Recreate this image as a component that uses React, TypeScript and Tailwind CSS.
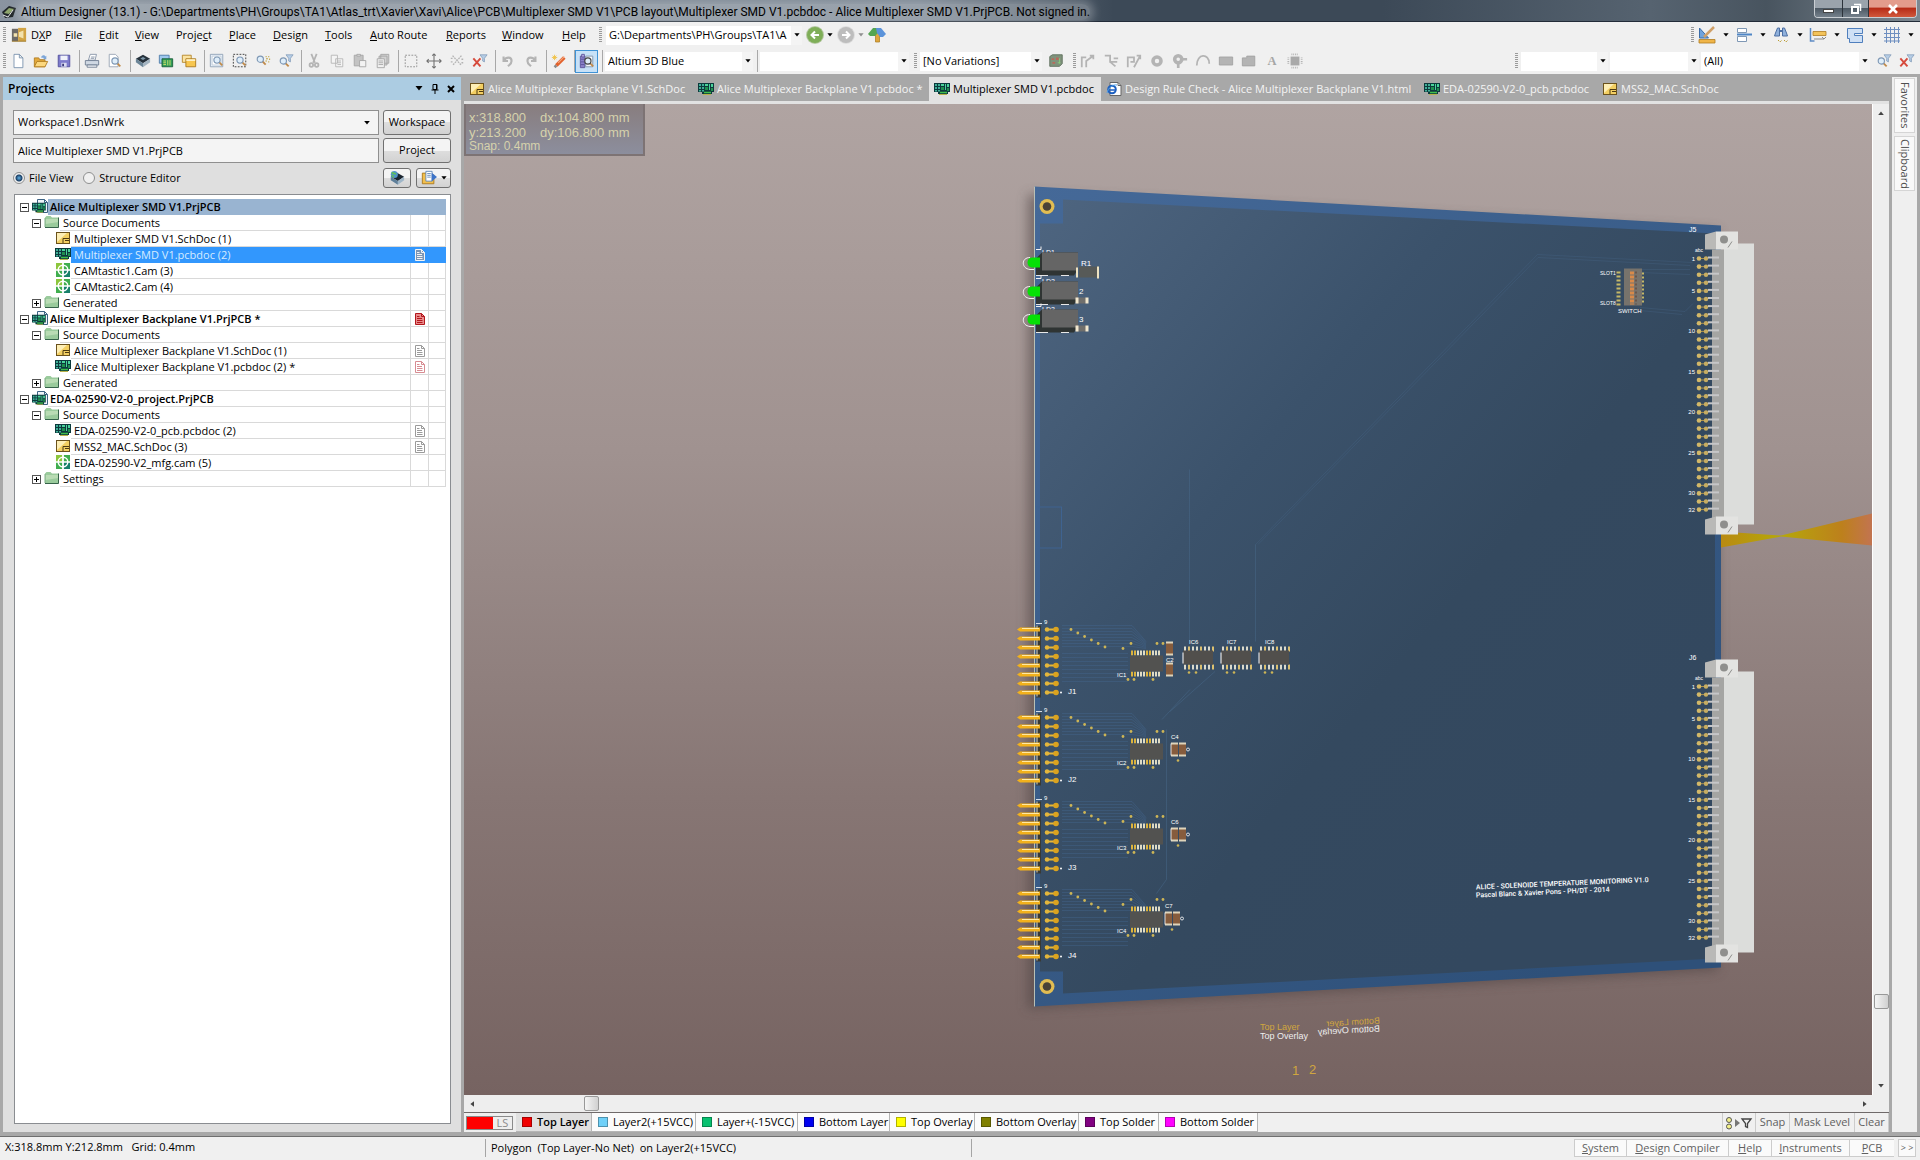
import { useState, type ReactNode } from "react";
import clsx from "clsx";

type DocKind = "sch" | "pcb" | "cam" | "html";

interface TreeRow {
  label: string;
  level: 0 | 1 | 2;
  kind: "project" | "folder" | DocKind;
  toggle?: "+" | "-";
  state?: "open" | "modified" | "modifiedDoc";
}

const TREE: TreeRow[] = [
  { label: "Alice Multiplexer SMD V1.PrjPCB", level: 0, kind: "project", toggle: "-" },
  { label: "Source Documents", level: 1, kind: "folder", toggle: "-" },
  { label: "Multiplexer SMD V1.SchDoc (1)", level: 2, kind: "sch" },
  { label: "Multiplexer SMD V1.pcbdoc (2)", level: 2, kind: "pcb", state: "open" },
  { label: "CAMtastic1.Cam (3)", level: 2, kind: "cam" },
  { label: "CAMtastic2.Cam (4)", level: 2, kind: "cam" },
  { label: "Generated", level: 1, kind: "folder", toggle: "+" },
  { label: "Alice Multiplexer Backplane V1.PrjPCB *", level: 0, kind: "project", toggle: "-", state: "modified" },
  { label: "Source Documents", level: 1, kind: "folder", toggle: "-" },
  { label: "Alice Multiplexer Backplane V1.SchDoc (1)", level: 2, kind: "sch", state: "open" },
  { label: "Alice Multiplexer Backplane V1.pcbdoc (2) *", level: 2, kind: "pcb", state: "modifiedDoc" },
  { label: "Generated", level: 1, kind: "folder", toggle: "+" },
  { label: "EDA-02590-V2-0_project.PrjPCB", level: 0, kind: "project", toggle: "-" },
  { label: "Source Documents", level: 1, kind: "folder", toggle: "-" },
  { label: "EDA-02590-V2-0_pcb.pcbdoc (2)", level: 2, kind: "pcb", state: "open" },
  { label: "MSS2_MAC.SchDoc (3)", level: 2, kind: "sch", state: "open" },
  { label: "EDA-02590-V2_mfg.cam (5)", level: 2, kind: "cam" },
  { label: "Settings", level: 1, kind: "folder", toggle: "+" },
];

const MENU = [
  { label: "DXP", key: 1, width: "w-[34px]" },
  { label: "File", key: 0, width: "w-[34px]" },
  { label: "Edit", key: 0, width: "w-[36px]" },
  { label: "View", key: 0, width: "w-[41px]" },
  { label: "Project", key: 5, width: "w-[53px]" },
  { label: "Place", key: 0, width: "w-[44px]" },
  { label: "Design", key: 0, width: "w-[52px]" },
  { label: "Tools", key: 0, width: "w-[45px]" },
  { label: "Auto Route", key: 0, width: "w-[76px]" },
  { label: "Reports", key: 0, width: "w-[56px]" },
  { label: "Window", key: 0, width: "w-[60px]" },
  { label: "Help", key: 0, width: "w-[37px]" },
];

const DOC_TABS: { label: string; kind: DocKind; width: string }[] = [
  { label: "Alice Multiplexer Backplane V1.SchDoc", kind: "sch", width: "w-[229px]" },
  { label: "Alice Multiplexer Backplane V1.pcbdoc *", kind: "pcb", width: "w-[236px]" },
  { label: "Multiplexer SMD V1.pcbdoc", kind: "pcb", width: "w-[172px]" },
  { label: "Design Rule Check - Alice Multiplexer Backplane V1.html", kind: "html", width: "w-[318px]" },
  { label: "EDA-02590-V2-0_pcb.pcbdoc", kind: "pcb", width: "w-[178px]" },
  { label: "MSS2_MAC.SchDoc", kind: "sch", width: "w-[128px]" },
];

const LAYERS = [
  { label: "Top Layer", color: "bg-[#f00000]", width: "w-[76px]" },
  { label: "Layer2(+15VCC)", color: "bg-[#6fd0f8]", width: "w-[104px]" },
  { label: "Layer+(-15VCC)", color: "bg-[#08c070]", width: "w-[102px]" },
  { label: "Bottom Layer", color: "bg-[#0000f0]", width: "w-[92px]" },
  { label: "Top Overlay", color: "bg-[#ffff00]", width: "w-[85px]" },
  { label: "Bottom Overlay", color: "bg-[#808000]", width: "w-[104px]" },
  { label: "Top Solder", color: "bg-[#800080]", width: "w-[80px]" },
  { label: "Bottom Solder", color: "bg-[#ff00ff]", width: "w-[99px]" },
];

const PANELS = [
  { label: "System", width: "w-[52px]" },
  { label: "Design Compiler", width: "w-[102px]" },
  { label: "Help", width: "w-[43px]" },
  { label: "Instruments", width: "w-[78px]" },
  { label: "PCB", width: "w-[45px]" },
];

/* ---------- small drawings ---------- */

function Arrow({ className }: { className?: string }) {
  return (
    <svg viewBox="0 0 8 5" className={clsx("h-1 w-2", className)}>
      <path d="M0.5 0h7L4 4.5z" fill="currentColor" />
    </svg>
  );
}

function PcbGlyph() {
  return (
    <g>
      <path d="M0 1h16v9h-2v2H4v-2H0z" fill="#0c3a3c" />
      <path d="M1 2h2v2H1zM4 2h2v2H4zM1 5h2v2H1zM4 5h2v2H4zM1 8h2v1.500H1zM4 8h2v1.500H4z" fill="#3fae97" />
      <path d="M7 2h3v2H7zM11 2h1v6h-1zM13 2h2v3h-2z" fill="#49d39a" />
      <path d="M7 5h3v3H7zM13 6h2v3h-2z" fill="#1f8f4e" />
      <path d="M6 10.500h7" stroke="#3fbf4c" strokeWidth="1.500" />
      <path d="M5 12.500h8" stroke="#b9b04a" />
    </g>
  );
}

function DocIcon({ kind }: { kind: TreeRow["kind"] }) {
  return (
    <svg viewBox="0 0 16 14" className="h-[14px] w-4 shrink-0">
      {kind === "pcb" && <PcbGlyph />}
      {kind === "project" && (
        <g>
          <path d="M5.500.5h7l3 3v10h-10z" fill="#eef4fa" stroke="#3d6384" />
          <path d="M12.500.5v3h3" fill="none" stroke="#3d6384" />
          <g transform="translate(0 3) scale(.86)">
            <PcbGlyph />
          </g>
        </g>
      )}
      {kind === "folder" && (
        <g>
          <path d="M1 12.500V2.500L2.500 1h4L8 2.500h6.500v10z" fill="#9acb9c" />
          <path d="M1.500 4h13v3L1.500 9z" fill="#b9dcb4" />
          <path d="M1 12.500h13.500v-10" fill="none" stroke="#36634a" />
          <path d="M1 3v9" stroke="#7fae86" />
        </g>
      )}
      {kind === "sch" && (
        <g>
          <rect x="1.500" y="1.500" width="13" height="11" fill="#f3cf62" stroke="#6b521c" />
          <path d="M2 2h10L2 11z" fill="#fdeeb5" />
          <path d="M8 12V7.500h6M10 9.500h4" fill="none" stroke="#4d3a12" />
        </g>
      )}
      {kind === "cam" && (
        <g>
          <path d="M1 0h6.500v7H1z" fill="#8cc63c" />
          <path d="M8.500 0H15v7H8.500zM1 7h6.500v7H1z" fill="#3fae4e" />
          <path d="M8.500 7H15v7H8.500z" fill="#17806a" />
          <circle cx="8" cy="7" r="4.800" fill="none" stroke="#fff" strokeWidth="1.400" />
          <path d="M8 0v14M1 7h14" stroke="#fff" strokeWidth="1.600" />
        </g>
      )}
      {kind === "html" && (
        <g>
          <path d="M4 .5h8l3 3v10H4z" fill="#fff" stroke="#666" />
          <path d="M12 .5v3h3" fill="none" stroke="#666" />
          <circle cx="6" cy="7.500" r="3.800" fill="none" stroke="#1c5fc0" strokeWidth="2" />
          <path d="M2.500 8h7" stroke="#1c5fc0" strokeWidth="1.500" />
          <path d="M1 11C2 6 7 2 11 3" fill="none" stroke="#4fa1e8" />
        </g>
      )}
    </svg>
  );
}

function StateIcon({ state, selected }: { state: TreeRow["state"]; selected: boolean }) {
  if (!state) return null;
  const color =
    state === "modified" ? "#b3171d" : state === "modifiedDoc" ? "#d78c92" : selected ? "#f4f4f4" : "#9b9b9b";
  return (
    <svg viewBox="0 0 10 12" className="h-3 w-[10px]">
      <path
        d="M.5.5h6l3 3v8h-9z"
        fill={state === "modified" ? "#e88a8a" : selected ? "#7d96b4" : "#fff"}
        stroke={color}
      />
      <path d="M6.500.5v3h3M2 5.500h5M2 7.500h5.500M2 9.500h5.500M2 3.500h2.500" fill="none" stroke={color} />
    </svg>
  );
}

const GREY = "#b4b4b4";

const lens = (cx: number, cy: number, stroke = "#7f98b5") => (
  <g>
    <path d={`M${cx + 2} ${cy + 2}l4 4`} stroke="#c08a4a" strokeWidth="2" />
    <circle cx={cx} cy={cy} r="3.500" fill="#dfeefa" stroke={stroke} strokeWidth="1.300" />
  </g>
);

const funnel = (x: number, y: number) => (
  <path d={`M${x} ${y}h8l-3 4v4l-2-1V${y + 4}z`} fill="#b6cde6" stroke="#7e97b4" strokeWidth=".8" />
);

const ICONS: Record<string, ReactNode> = {
  logo: (
    <g>
      <path d="M1 2h7v14H1z" fill="#6d6a66" />
      <path d="M8 1h9v15H8z" fill="#d1a344" />
      <path d="M3 7h4v4H3zM9 6l5-2v9l-5-2z" fill="#f3e2ad" />
      <path d="M1 16h16" stroke="#9b7524" />
    </g>
  ),
  new: <path d="M4.500 1.500h6l4 4v11h-10zM10.500 1.500v4h4" fill="#fff" stroke="#7890ad" />,
  open: (
    <g>
      <path d="M1.500 15.500v-10h5l1 2h6v8z" fill="#e3a93c" stroke="#b07c20" />
      <path d="M1.500 15.500l3-6h12l-3 6z" fill="#fbd77e" stroke="#b07c20" />
      <path d="M9 5c1-3 4-3 5-1l1-1v4h-4l1.500-1.500" fill="#7da6d8" />
    </g>
  ),
  save: (
    <g>
      <path d="M2.500 2.500h13v13h-13z" fill="#7d7bcb" stroke="#504e9c" />
      <path d="M5 3h8v5H5z" fill="#f0f2fb" />
      <path d="M6 11h6v4.500H6z" fill="#d8daf0" />
      <path d="M7 12h2v3H7z" fill="#3a3a78" />
    </g>
  ),
  print: (
    <g>
      <path d="M5 8l2-6.500h7L12.500 8z" fill="#fff" stroke="#8492a5" />
      <path d="M1.500 8.500h15v5h-15z" fill="#cfd8e3" stroke="#6d7c90" />
      <path d="M3.500 13.500h11v2.500h-11z" fill="#f1f4f8" stroke="#6d7c90" />
      <path d="M8 4.500h4M7.500 6h4" stroke="#8492a5" />
    </g>
  ),
  preview: (
    <g>
      <path d="M2.500 1.500h7l3 3v11h-10z" fill="#fff" stroke="#97a3b2" />
      {lens(9, 9)}
    </g>
  ),
  cube: (
    <g>
      <path d="M9 2l8 4.500-8 5-8-5z" fill="#26323c" />
      <path d="M1 6.500v4l8 5.500v-4.500z" fill="#6b8597" />
      <path d="M17 6.500v4L9 16v-4.500z" fill="#a3b4c1" />
      <path d="M9 4.500l3 1.700-3 1.800-3-1.800z" fill="#7d97a8" />
    </g>
  ),
  cubeView: (
    <g>
      <path d="M9 3l8 4.500-7 5-8-5z" fill="#1b2530" />
      <path d="M2 7.500v4l8 5v-4z" fill="#5e7f9a" />
      <path d="M17 7.500v4l-7 5v-4z" fill="#9fb6c8" />
      <circle cx="6" cy="5" r="4" fill="#4f93c9" />
      <path d="M3 3c2 0 3 2 5 1M3 6c1 0 2 1 2 2.500" fill="none" stroke="#5fbf5a" strokeWidth="1.800" />
    </g>
  ),
  board: (
    <g>
      <path d="M1.500 2.500h11v9h-11z" fill="#9ec8ee" stroke="#4d7ba8" />
      <path d="M4.500 6.500h12v9h-12z" fill="#2f9b58" stroke="#1a5d37" />
      <path d="M6 9h3M6 11h3M6 13h3M11 8v6M13.500 8v6" stroke="#d7e36a" />
    </g>
  ),
  sheets: (
    <g>
      <path d="M1.500 2.500h10v8h-10z" fill="#fbe3a1" stroke="#b58527" />
      <path d="M5.500 6.500h11v9h-11z" fill="#f7c650" stroke="#a8781d" />
      <path d="M6 7h10v2H6z" fill="#fdf0c8" />
    </g>
  ),
  zoomDoc: (
    <g>
      <path d="M1.500 1.500h14v14h-14z" fill="#e8f0f9" stroke="#8ea0b5" />
      <path d="M3.500 3.500h10v10h-10z" fill="#fff" stroke="#c0ccd9" />
      {lens(9, 8)}
    </g>
  ),
  zoomArea: (
    <g>
      <path d="M1.500 1.500h14v14h-14z" fill="none" stroke="#333" strokeDasharray="2 1.500" />
      {lens(9, 8)}
    </g>
  ),
  zoomPts: (
    <g>
      {lens(6, 7)}
      <path d="M12 4h1M15 4h1M13 6l1 1M12 9h1M15 10h1M16 7h1" stroke="#b99a2e" strokeWidth="1.500" />
    </g>
  ),
  zoomFilter: (
    <g>
      {funnel(9, 2)}
      {lens(6, 9)}
    </g>
  ),
  cut: (
    <g fill="none" stroke={GREY} strokeWidth="2">
      <path d="M6 1l4 10M12 1L8 11" />
      <circle cx="6" cy="13.500" r="2" />
      <circle cx="12" cy="13.500" r="2" />
    </g>
  ),
  copy: <path d="M2.500 2.500h7v9h-7zM7.500 6.500h8v9h-8zM9.500 9h4M9.500 11h4M9.500 13h4" fill="#f4f4f4" stroke={GREY} />,
  paste: (
    <g stroke="#a5a5a5">
      <path d="M2.500 2.500h10v12h-10z" fill="#c3c3c3" />
      <path d="M5.500 1.500h4v2h-4z" fill="#e3e3e3" />
      <path d="M8.500 8.500h7v7h-7z" fill="#f3f3f3" />
    </g>
  ),
  pasteMany: (
    <g stroke="#a5a5a5">
      <path d="M6.500 1.500h9v10h-9zM4.500 3.500h9v10h-9z" fill="#d2d2d2" />
      <path d="M2.500 6.500h8v10h-8zM4 9h5M4 11h5M4 13h5" fill="#f0f0f0" />
    </g>
  ),
  select: <path d="M2.500 2.500h13v13h-13z" fill="none" stroke="#8a8a8a" strokeDasharray="2 1.500" />,
  move: (
    <path
      d="M9 1v16M1 9h16M7 3l2-2 2 2M7 15l2 2 2-2M3 7L1 9l2 2M15 7l2 2-2 2"
      fill="none"
      stroke="#6f6f6f"
      strokeWidth="1.200"
    />
  ),
  deselect: (
    <path d="M4 3l10 11M14 3L4 14M2 6h2M2 10h2M14 7h3M14 11h3" fill="none" stroke={GREY} strokeWidth="1.500" strokeDasharray="2 1" />
  ),
  clearFilter: (
    <g>
      {funnel(9, 2)}
      <path d="M1.500 6l8 9M9.500 6l-8 9" stroke="#d64a3c" strokeWidth="2.200" />
    </g>
  ),
  undo: <path d="M4 4v5h5M4.500 8.500C7 4 13 4 13 9c0 3-2 4-4 6" fill="none" stroke={GREY} strokeWidth="2.400" />,
  redo: <path d="M14 4v5H9M13.500 8.500C11 4 5 4 5 9c0 3 2 4 4 6" fill="none" stroke={GREY} strokeWidth="2.400" />,
  wand: (
    <g>
      <path d="M6 14L15 5" stroke="#e2622d" strokeWidth="4" />
      <path d="M8 11L15 4" stroke="#f4a77f" strokeWidth="1.200" />
      <path d="M4 16l2-2" stroke="#8a8a8a" strokeWidth="3" />
      <path d="M4 2v6M1 5h6M2 3l4 4M6 3L2 7" stroke="#f0c040" />
    </g>
  ),
  inspect: (
    <g>
      <path d="M1.500 3.500h5v13h-5z" fill="#8b82c9" stroke="#5a529a" />
      <path d="M3 1.500h3v3H3zM2 7h4M2 10h4M2 13h4" fill="#b9b2e6" stroke="#5a529a" />
      <path d="M7.500 3.500h8v12h-8z" fill="#f5f8fb" stroke="#7d90a8" />
      {lens(10, 9, "#444")}
    </g>
  ),
  route1: <path d="M2 16V5h5M7 16V9l8-6M11 3h4v4" fill="none" stroke={GREY} strokeWidth="2" />,
  route2: <path d="M2 3h6v7h8M8 10l6 5M12 6h5" fill="none" stroke={GREY} strokeWidth="2" />,
  route3: <path d="M2 16V5h7v5H5M9 16l7-13M12 3h4v4" fill="none" stroke={GREY} strokeWidth="2" />,
  pad: <circle cx="9" cy="9" r="4.500" fill="none" stroke={GREY} strokeWidth="4" />,
  via: (
    <g>
      <circle cx="7" cy="7" r="4" fill="none" stroke={GREY} strokeWidth="4" />
      <path d="M11 7h6M7 12v5" stroke={GREY} strokeWidth="3" />
    </g>
  ),
  arc: <path d="M2 14C2 0 16 0 16 12" fill="none" stroke={GREY} strokeWidth="2" />,
  fill: <path d="M1.500 4.500h15v9h-15z" fill={GREY} stroke="#a2a2a2" />,
  poly: <path d="M1.500 5.500h5v-2h9v11h-14z" fill={GREY} stroke="#a2a2a2" />,
  text: (
    <text x="4" y="14" fontSize="14" fontWeight="bold" fontFamily="Liberation Serif, serif" fill="#a6a6a6">
      A
    </text>
  ),
  chip: (
    <g>
      <path d="M4 4h10v10H4z" fill="#a9a9a9" />
      <path d="M5 1.500h8M5 16.500h8" stroke={GREY} strokeWidth="2" strokeDasharray="1 1" />
      <path d="M1.500 5v8M16.500 5v8" stroke={GREY} strokeWidth="2" strokeDasharray="1 1" />
    </g>
  ),
  variant: (
    <g>
      <path d="M2 4l3-2h11v10l-3 3H2z" fill="#7f937c" stroke="#5d6f5b" />
      <path d="M4 6h3v2H4zM9 5h3v3H9zM5 10h3v2H5z" fill="#b9695a" />
      <path d="M13 6v6M11 11h3" stroke="#8ad07a" />
    </g>
  ),
  draw: (
    <g>
      <path d="M1.500 2v10h9z" fill="#6fa3dd" stroke="#3b6ca8" />
      <path d="M6 11L16 1" stroke="#d0a068" strokeWidth="2.500" />
      <path d="M1 13.500h16v3.500H1z" fill="#f0b548" stroke="#b07c20" strokeWidth=".8" />
    </g>
  ),
  align: (
    <g stroke="#7f98b5">
      <path d="M2.500 2.500h9v4h-9zM2.500 10.500h9v5h-9z" fill="#fff" />
      <path d="M2 8.500h15" stroke="#4f86c6" strokeWidth="2" />
    </g>
  ),
  find: (
    <g>
      <path d="M3.500 7l2-5h2v8h-5zM14.500 7l-2-5h-2v8h5z" fill="#8fb0dc" stroke="#4c6fa3" />
      <path d="M7 5h4" stroke="#4c6fa3" strokeWidth="2" />
      <path d="M6 14l2 2 2-2M12 14l2 2 2-2" fill="none" stroke="#b99a2e" strokeDasharray="1.500 1" />
    </g>
  ),
  dimension: (
    <g>
      <path d="M1.500 2v13h4" fill="none" stroke="#5d8bc4" strokeWidth="1.500" />
      <path d="M4 5.500h13v4H4z" fill="#f3c35a" stroke="#b07c20" strokeWidth=".8" />
      <path d="M5 13h10M13 11l2 2 2-2" fill="none" stroke="#8a8a8a" />
    </g>
  ),
  room: <path d="M1.500 2.500h15v5h-8v2h8v7h-13v-4h-2z" fill="#cfe0f5" stroke="#4f7fbd" />,
  grid: <path d="M3.500 1v16M7.500 1v16M11.500 1v16M15.500 1v16M1 3.500h16M1 7.500h16M1 11.500h16M1 15h16" stroke="#6f8fc0" />,
  exchange: (
    <g>
      <path d="M1.500 3.500h6l1 2h6v10h-13z" fill="#f2bf4d" stroke="#a8781d" />
      <path d="M5.500 1.500h7v11h-7z" fill="#fff" stroke="#5d86b8" />
      <path d="M7 4h4M7 6h4M7 8h4" stroke="#5d86b8" />
      <path d="M12 3l6 5-6 5z" fill="#3d74c8" />
    </g>
  ),
};

function Icon({ name, className = "h-[18px] w-[18px]" }: { name: string; className?: string }) {
  return (
    <svg viewBox="0 0 18 18" className={className}>
      {ICONS[name]}
    </svg>
  );
}

function Grip() {
  return <span className="h-4 w-[3px] shrink-0 bg-[repeating-linear-gradient(#9a9a9a_0_1px,transparent_1px_2px)]" />;
}

function Separator() {
  return <span className="h-[22px] w-[5px] shrink-0 border-r border-[#a8a8a8]" />;
}

function ToolButton({ name, active }: { name: string; active?: boolean }) {
  return (
    <button
      aria-label={name}
      className={clsx(
        "flex h-[23px] w-[23px] shrink-0 items-center justify-center",
        active && "border border-[#3f93d6] bg-[#c7e1f7]"
      )}
    >
      <Icon name={name} className="h-4 w-4" />
    </button>
  );
}

function Combo({ label, value, className }: { label: string; value: string; className: string }) {
  return (
    <div className={clsx("relative h-[19px] shrink-0 bg-white", className)}>
      <select aria-label={label} className="h-full w-full appearance-none bg-transparent pr-3 pl-[3px] outline-none">
        <option>{value}</option>
      </select>
      <span className="pointer-events-none absolute inset-y-0 right-0 flex w-[11px] items-center justify-center bg-[#f4f4f4]">
        <Arrow className="w-[6px]" />
      </span>
    </div>
  );
}

/* ---------- window chrome ---------- */

function TitleBar() {
  return (
    <header className="flex h-[22px] shrink-0 items-start justify-between border-b border-[#222b38] bg-[linear-gradient(90deg,#8a94a1_0,#7c8793_8%,#76828f_48%,#3c4957_58%,#3c4957_72%,#566370_86%,#48545f_92%,#7d8891_100%)]">
      <div className="flex items-center">
        <svg viewBox="0 0 16 16" className="mt-1 ml-px h-4 w-4">
          <path d="M1 8l7-6 7 2-3 9-8 1z" fill="#20262a" />
          <path d="M3 9l5-5 5 1-5 5z" fill="#8fa66d" />
          <path d="M2 11l5 2 5-7" fill="none" stroke="#e5e5e5" />
        </svg>
        <h1 className="mt-[3px] ml-1 rounded-full bg-white/25 font-['Roboto',sans-serif] text-[12px] leading-4 whitespace-nowrap text-black shadow-[0_0_8px_4px_rgba(255,255,255,0.25)]">
          Altium Designer (13.1) - G:\Departments\PH\Groups\TA1\Atlas_trt\Xavier\Xavi\Alice\PCB\Multiplexer SMD V1\PCB
          layout\Multiplexer SMD V1.pcbdoc - Alice Multiplexer SMD V1.PrjPCB. Not signed in.
        </h1>
      </div>
      <div className="mr-[3px] flex h-[18px] overflow-hidden rounded-b-[4px] border border-t-0 border-[#c9ced3]">
        <button aria-label="Minimize" className="flex w-7 items-end justify-center border-r border-[#2c333b] bg-[linear-gradient(#9aa3ac_45%,#4d5964_50%,#75818c)] pb-1">
          <span className="h-[4px] w-[11px] border border-[#444] bg-white" />
        </button>
        <button aria-label="Restore" className="flex w-[26px] items-center justify-center border-r border-[#2c333b] bg-[linear-gradient(#9aa3ac_45%,#4d5964_50%,#75818c)]">
          <svg viewBox="0 0 12 12" className="h-3 w-3">
            <path d="M4 1.500h6.500V8" fill="none" stroke="#fff" strokeWidth="1.500" />
            <rect x="2" y="4" width="6" height="6" fill="none" stroke="#fff" strokeWidth="2" />
          </svg>
        </button>
        <button aria-label="Close" className="flex w-[47px] items-center justify-center bg-[linear-gradient(#e39c8c_40%,#b72d18_50%,#d1583c)]">
          <svg viewBox="0 0 12 12" className="h-3 w-3">
            <path d="M2 2l8 8M10 2l-8 8" stroke="#fff" strokeWidth="2.600" />
          </svg>
        </button>
      </div>
    </header>
  );
}

function MenuBar() {
  return (
    <div className="flex h-[26px] shrink-0 items-center bg-[#f0f0f0] pl-[3px]">
      <Grip />
      <Icon name="logo" className="mr-1 ml-[5px] h-4 w-4" />
      <nav className="flex items-center">
        {MENU.map((m) => (
          <button key={m.label} className={clsx("text-left whitespace-nowrap", m.width)}>
            {m.label.slice(0, m.key)}
            <u className="underline-offset-1">{m.label[m.key]}</u>
            {m.label.slice(m.key + 1)}
          </button>
        ))}
      </nav>
      <Grip />
      <Combo label="Path" value="G:\Departments\PH\Groups\TA1\A" className="ml-1 w-[196px]" />
      <button aria-label="Back" className="ml-[5px] flex h-4 w-4 items-center justify-center rounded-full bg-[#7fae58] ring-1 ring-[#b5c8a2]">
        <svg viewBox="0 0 10 10" className="h-[10px] w-[10px]">
          <path d="M9 5H2M5 1.500L1.500 5 5 8.500" fill="none" stroke="#fff" strokeWidth="2" />
        </svg>
      </button>
      <Arrow className="mx-1 w-[6px]" />
      <button aria-label="Forward" className="ml-px flex h-4 w-4 items-center justify-center rounded-full bg-[#bdbdbd] ring-1 ring-[#dedede]">
        <svg viewBox="0 0 10 10" className="h-[10px] w-[10px]">
          <path d="M1 5h7M5 1.500L8.500 5 5 8.500" fill="none" stroke="#fff" strokeWidth="2" />
        </svg>
      </button>
      <Arrow className="mx-1 w-[6px] text-[#8f8f8f]" />
      <button aria-label="Home">
        <svg viewBox="0 0 18 18" className="h-[18px] w-[18px]">
          <path d="M7.500 6h4v10h-4z" fill="#e0a63c" stroke="#a8781d" strokeWidth=".7" />
          <path d="M0 8l5-6h5v5l-3 3H2z" fill="#54a551" />
          <path d="M8 2h5l5 6-3 3h-3L9 7z" fill="#5b93da" />
        </svg>
      </button>
      <div className="ml-auto flex items-center pr-1">
        <Grip />
        {["draw", "align", "find", "dimension", "room", "grid"].map((name) => (
          <button key={name} aria-label={name} className="flex w-[37px] items-center justify-between pr-[2px] pl-1">
            <Icon name={name} />
            <Arrow className="w-[6px]" />
          </button>
        ))}
      </div>
    </div>
  );
}

const TOOL_GROUPS = [
  ["new", "open", "save"],
  ["print", "preview"],
  ["cube", "board", "sheets"],
  ["zoomDoc", "zoomArea", "zoomPts", "zoomFilter"],
  ["cut", "copy", "paste", "pasteMany"],
  ["select", "move", "deselect", "clearFilter"],
  ["undo", "redo"],
  ["wand"],
];

const WIRING = ["route1", "route2", "route3", "pad", "via", "arc", "fill", "poly", "text", "chip"];

function ToolBar() {
  return (
    <div className="flex h-[26px] shrink-0 items-center bg-[#f0f0f0] pl-[3px]">
      <Grip />
      {TOOL_GROUPS.map((group) => (
        <div key={group[0]} className="flex items-center">
          {group.map((name) => (
            <ToolButton key={name} name={name} />
          ))}
          <Separator />
        </div>
      ))}
      <ToolButton name="inspect" active />
      <Separator />
      <Combo label="View configuration" value="Altium 3D Blue" className="ml-[2px] w-[148px]" />
      <Separator />
      <Combo label="Filter" value="" className="ml-[2px] w-[149px]" />
      <span className="w-[5px]" />
      <Grip />
      <Combo label="Variation" value="[No Variations]" className="ml-[3px] w-[122px]" />
      <span className="w-[2px]" />
      <ToolButton name="variant" />
      <span className="w-[6px]" />
      <Grip />
      {WIRING.map((name) => (
        <ToolButton key={name} name={name} />
      ))}
      <div className="ml-auto flex items-center pr-[2px]">
        <Grip />
        <Combo label="Net" value="" className="ml-[3px] w-[87px]" />
        <Combo label="Component" value="" className="ml-[2px] w-[89px]" />
        <Combo label="Scope" value="(All)" className="mr-[2px] ml-[2px] w-[169px]" />
        <ToolButton name="zoomFilter" />
        <ToolButton name="clearFilter" />
      </div>
    </div>
  );
}

/* ---------- projects panel ---------- */

const PANEL_BUTTON =
  "flex items-center justify-center rounded-[3px] border border-[#707070] bg-[linear-gradient(#f4f4f4_50%,#dedede_50%,#d2d2d2)]";

function TreeItem({ row, selected, onSelect }: { row: TreeRow; selected: boolean; onSelect: () => void }) {
  const bold = row.level === 0;
  const focus = row.label === TREE[0].label;
  return (
    <li
      role="treeitem"
      aria-selected={selected}
      onClick={onSelect}
      className={clsx("flex h-4 items-stretch", row.level === 0 ? "pl-[5px]" : row.level === 1 ? "pl-[17px]" : "pl-[40px]")}
    >
      {row.toggle && (
        <span className="mr-[2px] flex w-[10px] shrink-0 items-center">
          <svg viewBox="0 0 9 9" className="h-[9px] w-[9px]">
            <rect x=".5" y=".5" width="8" height="8" fill="#fff" stroke="#555" />
            <path d={row.toggle === "+" ? "M2 4.500h5M4.500 2v5" : "M2 4.500h5"} stroke="#000" />
          </svg>
        </span>
      )}
      <DocIcon kind={row.kind} />
      <div
        className={clsx(
          "flex min-w-0 flex-1 border-b",
          selected
            ? "border-[#3297fd] bg-[#3297fd] text-[#d6ebff]"
            : focus
              ? "border-[#99b4d1] bg-[#99b4d1]"
              : "border-[#d9d9d9]"
        )}
      >
        <span className={clsx("flex-1 truncate leading-4", bold ? "pl-[2px] font-semibold" : "pl-[3px]")}>{row.label}</span>
        {!focus && (
          <>
            <span
              className={clsx(
                "flex w-[18px] items-center justify-center border-l",
                selected ? "border-[#3297fd]" : "border-[#d9d9d9]"
              )}
            >
              <StateIcon state={row.state} selected={selected} />
            </span>
            <span className={clsx("w-[18px] border-x", selected ? "border-[#3297fd]" : "border-[#d9d9d9]")} />
          </>
        )}
      </div>
    </li>
  );
}

function ProjectsPanel() {
  const [selected, setSelected] = useState(3);

  return (
    <aside className="flex w-[458px] shrink-0 flex-col bg-[#dfdfdf]">
      <div className="flex h-[23px] items-center justify-between bg-[#accce2] pr-[6px] pl-[5px]">
        <h2 className="text-[12px] leading-5 font-semibold">Projects</h2>
        <div className="flex items-center gap-2">
          <button aria-label="Panel menu">
            <Arrow className="h-[5px]" />
          </button>
          <button aria-label="Pin">
            <svg viewBox="0 0 8 10" className="h-[10px] w-2">
              <path d="M2 .5h4v5H2zM.5 6h7M4 6v4M5.500 1v5" fill="none" stroke="#000" />
            </svg>
          </button>
          <button aria-label="Close panel">
            <svg viewBox="0 0 8 8" className="h-2 w-2">
              <path d="M1 1l6 6M7 1L1 7" stroke="#000" strokeWidth="2" />
            </svg>
          </button>
        </div>
      </div>

      <div className="flex flex-1 flex-col px-[10px] pt-[10px] pb-2">
        <div className="grid grid-cols-[1fr_68px] gap-x-1 gap-y-[3px]">
          <div className="relative h-[25px] border border-[#8f8f8f] bg-[#f4f4f4]">
            <select aria-label="Workspace file" className="h-full w-full appearance-none bg-transparent pl-1 outline-none">
              <option>Workspace1.DsnWrk</option>
            </select>
            <Arrow className="pointer-events-none absolute top-[10px] right-[7px]" />
          </div>
          <button className={PANEL_BUTTON}>Workspace</button>
          <input
            aria-label="Project file"
            defaultValue="Alice Multiplexer SMD V1.PrjPCB"
            className="h-[25px] border border-[#8f8f8f] bg-[#f4f4f4] pl-1 outline-none"
          />
          <button className={PANEL_BUTTON}>Project</button>
        </div>

        <div className="mt-[5px] flex h-5 items-center">
          {["File View", "Structure Editor"].map((label, i) => (
            <label key={label} className="mr-[10px] flex items-center gap-1">
              <input
                type="radio"
                name="view"
                defaultChecked={i === 0}
                className="h-3 w-3 appearance-none rounded-full border border-[#8e8f8f] bg-[#f0f0f0] checked:bg-[radial-gradient(#5fb2e6_0,#1b3f66_3px,#f0f0f0_4px)]"
              />
              {label}
            </label>
          ))}
          <button aria-label="Cube view" className={clsx(PANEL_BUTTON, "mr-[5px] ml-auto h-5 w-7")}>
            <Icon name="cubeView" className="h-4 w-4" />
          </button>
          <button aria-label="Exchange" className={clsx(PANEL_BUTTON, "h-5 w-[35px] gap-1")}>
            <Icon name="exchange" className="h-4 w-4" />
            <Arrow className="w-[6px]" />
          </button>
        </div>

        <ul role="tree" className="mt-[6px] ml-px flex-1 border border-[#8a8d91] bg-white pt-1 pr-1">
          {TREE.map((row, i) => (
            <TreeItem key={i} row={row} selected={i === selected} onSelect={() => setSelected(i)} />
          ))}
        </ul>
      </div>
    </aside>
  );
}

/* ---------- 3D board view ---------- */

const range = (n: number) => [...Array(n).keys()];

function Led({ y, label, tag }: { y: number; label: string; tag: string }) {
  return (
    <g>
      <path d={`M1036 ${y - 3}h5v-3M1034 ${y + 17}h-4c-9 -1 -9 -12 0 -12`} fill="none" stroke="#f2f2f2" />
      <text x="1042" y={y + 2} fontSize="7" fill="#fff">
        {label}
      </text>
      <path d={`M1036 ${y + 6}l6 -6h36v17l-4 6h-38z`} fill="#2f3433" />
      <path d={`M1036 ${y + 23}h12M1061 ${y + 23}h8`} stroke="#e8e8e8" />
      <rect x="1042" y={y} width="36" height="18" fill="#656565" />
      <path d={`M1040 ${y + 5}v10h-8c-6 0 -6 -10 0 -10z`} fill="#06e006" />
      <text x="1079" y={y + 12} fontSize="8" fill="#fff">
        {tag}
      </text>
    </g>
  );
}

function Header({ y, label }: { y: number; label: string }) {
  return (
    <g>
      {/* fan-out tracks towards the mux */}
      {range(8).map((i) => (
        <path
          key={i}
          d={`M1062 ${y - 4 + i * 3}h70l14 ${16 - i * 2}M1062 ${y + 24 + i * 4}h66`}
          fill="none"
          stroke="#456a92"
          strokeWidth=".7"
          opacity=".55"
        />
      ))}
      <rect x="1036" y={y - 4} width="5" height="72" fill="#3a3a34" />
      <path d={`M1037 ${y - 4}v71M1036 ${y - 6}h6`} stroke="#fff" strokeWidth=".8" />
      {range(8).map((i) => (
        <g key={i}>
          <path d={`M1017 ${y + i * 9}l3 -2h20v4h-20z`} fill="#f2b11c" />
          <path d={`M1022 ${y - 1 + i * 9}h17`} stroke="#ffe9a6" />
          <path d={`M1045 ${y + i * 9}h13`} stroke="#e6b73a" strokeWidth="2" />
          <circle cx="1047" cy={y + i * 9} r="2.200" fill="#e3b63c" />
          <circle cx="1056" cy={y + i * 9} r="2.800" fill="#dba31f" />
        </g>
      ))}
      {range(6).map((i) => (
        <circle key={i} cx={1071 + i * 6.800} cy={y + i * 3.500} r="1.400" fill="#cdb556" />
      ))}
      <text x="1044" y={y - 6} fontSize="6" fill="#fff">
        9
      </text>
      <circle cx="1061" cy={y + 63} r="1" fill="#fff" />
      <text x="1068" y={y + 64} fontSize="8" fill="#fff">
        {label}
      </text>
    </g>
  );
}

function Mux({ y, label }: { y: number; label: string }) {
  return (
    <g>
      {range(10).map((i) => (
        <g key={i} fill={i % 5 < 2 ? "#dcb33e" : "#e0dcc4"}>
          <rect x={1131 + i * 3} y={y - 5} width="2" height="5" />
          <rect x={1131 + i * 3} y={y + 16} width="2" height="5" />
        </g>
      ))}
      <rect x="1130" y={y} width="33" height="16" fill="#525250" />
      {[
        [1123, -7],
        [1131, -12],
        [1157, -12],
        [1163, -12],
        [1128, 24],
        [1134, 24],
        [1153, 24],
      ].map(([x, dy]) => (
        <circle key={`${x}${dy}`} cx={x} cy={y + dy} r="1.400" fill="#cdb556" />
      ))}
      <text x="1117" y={y + 21} fontSize="6" fill="#fff">
        {label}
      </text>
    </g>
  );
}

function Capacitor({ x, y }: { x: number; y: number }) {
  return (
    <g>
      <rect x={x} y={y} width="7" height="14" fill="#ded4bb" />
      <rect x={x} y={y + 2} width="7" height="10" fill="#865c3d" />
    </g>
  );
}

function Soic({ x, label }: { x: number; label: string }) {
  return (
    <g>
      {range(8).map((i) => (
        <g key={i} fill={i % 3 === 1 ? "#dcc070" : "#dcdacb"}>
          <rect x={x + 1 + i * 4} y="647" width="2" height="5" />
          <rect x={x + 1 + i * 4} y="665" width="2" height="5" />
        </g>
      ))}
      <rect x={x} y="651" width="30" height="14" fill="#514f4c" />
      <path d={`M${x} 653v11`} stroke="#fff" />
      <circle cx={x + 6} cy="673" r="1.300" fill="#cdb556" />
      <circle cx={x + 13} cy="673" r="1.300" fill="#cdb556" />
      <text x={x + 6} y="644" fontSize="6" fill="#fff">
        {label}
      </text>
    </g>
  );
}

function EdgeConnector({ y, label }: { y: number; label: string }) {
  return (
    <g>
      <text x="1689" y={y} fontSize="7" fill="#fff">
        {label}
      </text>
      <text x="1695" y={y + 20} fontSize="5" fill="#fff">
        abc
      </text>
      <rect x="1712" y={y + 18} width="13" height="270" fill="#a5a5a3" />
      {range(32).map((i) => (
        <g key={i}>
          <path d={`M1697 ${y + 27 + i * 8.100}h9`} stroke="#a98f4a" />
          <circle cx="1699" cy={y + 27 + i * 8.100} r="2.300" fill="#d3b868" />
          <circle cx="1706" cy={y + 27 + i * 8.100} r="2.200" fill="#c7ad62" />
          <path d={`M1708 ${y + 26 + i * 8.100}h11`} stroke="#c6c6c8" strokeWidth="2" />
        </g>
      ))}
      {[1, 5, 10, 15, 20, 25, 30, 32].map((n) => (
        <text key={n} x="1695" y={y + 29 + (n - 1) * 8.100} fontSize="6" fill="#fff" textAnchor="end">
          {n}
        </text>
      ))}
      <path d={`M1724 ${y + 12}h30v281h-30z`} fill="#dcdddb" />
      {[0, 285].map((dy) => (
        <g key={dy}>
          <path d={`M1705 ${y + dy + 3}l11 -3v18h-11z`} fill="#b9b9b7" />
          <path d={`M1716 ${y + dy}h22v18h-22z`} fill="#e3e3e1" />
          <circle cx="1724" cy={y + dy + 8} r="4" fill="#8f8f8d" />
          <path d={`M1728 ${y + dy + 16}l4 -6`} stroke="#8f8f8d" />
        </g>
      ))}
    </g>
  );
}

function BoardView() {
  return (
    <svg
      viewBox="464 104 1408 992"
      preserveAspectRatio="xMidYMid slice"
      className="absolute inset-0 h-full w-full"
      fontFamily="Liberation Sans, sans-serif"
    >
      <defs>
        <linearGradient id="sky" x1="0" y1="0" x2="0" y2="1">
          <stop offset="0" stopColor="#b0a4a2" />
          <stop offset=".35" stopColor="#a09290" />
          <stop offset=".7" stopColor="#877674" />
          <stop offset="1" stopColor="#766361" />
        </linearGradient>
        <linearGradient id="mask" x1="0" y1="0" x2=".8" y2=".8">
          <stop offset="0" stopColor="#4e6580" />
          <stop offset=".4" stopColor="#3b526b" />
          <stop offset=".7" stopColor="#34495f" />
          <stop offset="1" stopColor="#33485f" />
        </linearGradient>
        <linearGradient id="rim" x1="0" y1="0" x2=".7" y2="1">
          <stop offset="0" stopColor="#456998" />
          <stop offset="1" stopColor="#2e5079" />
        </linearGradient>
        <linearGradient id="beam" x1="0" y1="0" x2="1" y2="0">
          <stop offset="0" stopColor="#b98a12" />
          <stop offset=".4" stopColor="#b5a80a" />
          <stop offset=".8" stopColor="#bd801c" />
          <stop offset="1" stopColor="#c27450" />
        </linearGradient>
        <filter id="soft" x="-10%" y="-10%" width="120%" height="120%">
          <feGaussianBlur stdDeviation="6" />
        </filter>
      </defs>
      <rect x="-600" y="104" width="3600" height="992" fill="url(#sky)" />

      <path d="M1028 195l690 36v740l-690 38z" fill="#4c4040" opacity=".55" filter="url(#soft)" />
      <path d="M1721 532l60 4 91 -22v32l-91 -9 -60 11z" fill="url(#beam)" />

      <path d="M1034 187l687 39v742l-687 39z" fill="url(#rim)" />
      <path d="M1040 224h23v-24l652 34v725l-652 35v-22h-23z" fill="url(#mask)" />
      <path d="M1034.500 187v820" stroke="#b9c0b6" />
      <rect x="1035.500" y="507.500" width="26" height="41" fill="none" stroke="#3f6390" />

      <path
        d="M1189.500 470v172M1255.500 642v-97M1166.500 730v150l-10 14M1190 690l-28 30M1215 672l-45 40"
        fill="none"
        stroke="#47698c"
        strokeWidth=".8"
        opacity=".6"
      />
      <path
        d="M1255.500 545l282 -290l155 8M1258 545l280 -287 152 8M1640 270h50M1640 273l50 2M1640 308l45 4 8 -8M1640 311l42 4"
        fill="none"
        stroke="#47698c"
        strokeWidth=".8"
        opacity=".4"
      />

      {[207, 987].map((y) => (
        <g key={y}>
          <circle cx="1047" cy={y} r="7.500" fill="#e2bd52" />
          <circle cx="1047" cy={y} r="4.300" fill="#4a4237" />
        </g>
      ))}

      <Led y={253} label="LD1" tag="" />
      <rect x="1079" y="267" width="20" height="11" fill="#575a58" />
      <path d="M1077 268v10M1098 267v12" stroke="#eee3c2" strokeWidth="2" />
      <text x="1081" y="266" fontSize="8" fill="#fff">
        R1
      </text>
      {[
        [282, 298, 2],
        [310, 326, 3],
      ].map(([y, ry, n]) => (
        <g key={n}>
          <Led y={y} label={`LD${n}`} tag={`${n}`} />
          <rect x="1076" y={ry} width="10" height="6" fill="#706f6c" />
          <path d={`M1077 ${ry}v6M1087 ${ry}v6`} stroke="#f1e8d0" strokeWidth="3" />
        </g>
      ))}

      {[630, 718, 806, 894].map((y, i) => (
        <Header key={y} y={y} label={`J${i + 1}`} />
      ))}
      {[656, 744, 829, 912].map((y, i) => (
        <Mux key={y} y={y} label={`IC${i + 1}`} />
      ))}
      <Capacitor x={1166} y={642} />
      <Capacitor x={1166} y={663} />
      <text x="1166" y="662" fontSize="6" fill="#fff">
        C2
      </text>
      {[
        [1171, 743, "C4"],
        [1171, 828, "C6"],
        [1165, 912, "C7"],
      ].map(([x, y, name]) => (
        <g key={name}>
          <Capacitor x={Number(x)} y={Number(y)} />
          <Capacitor x={Number(x) + 8} y={Number(y)} />
          <path d={`M${Number(x)} ${Number(y) + 1}v12`} stroke="#fff" strokeWidth=".8" />
          <circle cx={Number(x) + 17} cy={Number(y) + 7} r="1.500" fill="none" stroke="#fff" strokeWidth=".8" />
          <circle cx={Number(x) + 7} cy={Number(y) + 18} r="1.300" fill="#cdb556" />
          <text x={x} y={Number(y) - 4} fontSize="6" fill="#fff">
            {name}
          </text>
        </g>
      ))}
      <Soic x={1183} label="IC6" />
      <Soic x={1221} label="IC7" />
      <Soic x={1259} label="IC8" />

      {/* slot selector */}
      <path d="M1618.500 272v34M1642 273v32" stroke="#c5b866" strokeWidth="4" strokeDasharray="2 2" />
      <rect x="1624" y="269" width="18" height="37" fill="#77736c" />
      <path d="M1632 272v33" stroke="#d88a4a" strokeWidth="4" strokeDasharray="3 1" />
      <path d="M1636 272v33" stroke="#5e3a2c" strokeDasharray="2 2" />
      <g fontSize="5" fill="#fff">
        <text x="1600" y="275">
          SLOT1
        </text>
        <text x="1600" y="305">
          SLOT8
        </text>
      </g>
      <text x="1618" y="313" fontSize="6" fill="#fff">
        SWITCH
      </text>

      <EdgeConnector y={232} label="J5" />
      <EdgeConnector y={660} label="J6" />

      <g fontSize="7" fontFamily="Roboto, sans-serif" fontWeight="500" fill="#fff">
        <text transform="rotate(-2.500 1476 890)" x="1476" y="890">
          ALICE - SOLENOIDE TEMPERATURE MONITORING V1.0
        </text>
        <text transform="rotate(-2.500 1476 898)" x="1476" y="898">
          Pascal Blanc &amp; Xavier Pons - PH/DT - 2014
        </text>
      </g>

      <g fontSize="9">
        <text x="1260" y="1030" fill="#d0a63f">
          Top Layer
        </text>
        <text x="1260" y="1039" fill="#eee">
          Top Overlay
        </text>
        <text transform="translate(1380 1024) scale(-1 1) rotate(3)" fill="#d0a63f">
          Bottom Layer
        </text>
        <text transform="translate(1380 1032) scale(-1 1) rotate(3)" fill="#eee">
          Bottom Overlay
        </text>
      </g>
      <g fontSize="13" fill="#d0a63f">
        <text x="1292" y="1075">
          1
        </text>
        <text x="1309" y="1074">
          2
        </text>
      </g>
    </svg>
  );
}

function HeadsUp() {
  return (
    <div className="absolute top-0 left-0 w-[181px] border-2 border-t-0 border-[#7d7374] bg-[linear-gradient(#887d7e,#8c8e9d)] pt-[6px] pb-px pl-[3px] font-['Liberation_Sans',sans-serif] text-[13px] leading-[15px] text-[#d6d2ac]">
      <div className="grid grid-cols-[71px_1fr]">
        <span>x:318.800</span>
        <span>dx:104.800 mm</span>
        <span>y:213.200</span>
        <span>dy:106.800 mm</span>
      </div>
      <p className="text-[12px] leading-[13px]">Snap: 0.4mm</p>
    </div>
  );
}

/* ---------- editor ---------- */

const THUMB = "rounded-[2px] border border-[#989898] bg-[linear-gradient(90deg,#f5f5f5,#d0d0d0)]";

function Editor() {
  const [tab, setTab] = useState(2);
  const [layer, setLayer] = useState(0);

  return (
    <main className="flex min-w-0 flex-1 flex-col">
      <div className="flex h-6 shrink-0 bg-[#a8a8a8] pr-1" role="tablist">
        {DOC_TABS.map((t, i) => (
          <button
            key={t.label}
            role="tab"
            aria-selected={i === tab}
            onClick={() => setTab(i)}
            className={clsx(
              "flex shrink-0 items-center gap-[3px] pl-[5px] whitespace-nowrap",
              t.width,
              i === tab ? "bg-[#e2e2e2] text-black" : "text-[#f4f4f4]"
            )}
          >
            <DocIcon kind={t.kind} />
            {t.label}
          </button>
        ))}
      </div>
      <div className="h-[3px] shrink-0 bg-[#e2e2e2]" />

      <div className="flex min-h-0 flex-1">
        <div className="relative min-h-[600px] min-w-0 flex-1 overflow-hidden">
          <BoardView />
          <HeadsUp />
        </div>
        <div className="flex w-[17px] shrink-0 flex-col items-center border-l border-white bg-[#eee] py-[7px]">
          <Arrow className="rotate-180 text-[#444]" />
          <span className="flex-[881]" />
          <span className={clsx("h-[15px] w-[15px]", THUMB)} />
          <span className="flex-[75]" />
          <Arrow className="text-[#444]" />
        </div>
      </div>

      <div className="flex h-[17px] shrink-0 items-center bg-[#eee] pr-[20px] pl-1">
        <Arrow className="rotate-90 text-[#444]" />
        <span className="flex-[108]" />
        <span className={clsx("h-[15px] w-[15px]", THUMB)} />
        <span className="flex-[1258]" />
        <Arrow className="-rotate-90 text-[#444]" />
      </div>

      <div className="flex h-5 shrink-0 border-t border-[#6f6a6a] bg-[#f0f0f0]">
        <div className="flex w-[52px] shrink-0 items-center bg-[#eee] pl-[2px]">
          <button className="flex h-[14px] w-[47px] border border-[#8a8a8a] text-[11px] leading-3 text-[#8a8a8a]">
            <span className="h-full w-[26px] bg-[#ff0000]" />
            <span className="flex-1">LS</span>
          </button>
        </div>
        {LAYERS.map((l, i) => (
          <button
            key={l.label}
            onClick={() => setLayer(i)}
            className={clsx(
              "flex shrink-0 items-center gap-[5px] border-r border-b border-[#b5b5b5] pl-[6px] whitespace-nowrap",
              l.width,
              i === layer ? "bg-[#e0e0e0] font-semibold" : "bg-[#fbfbfb]"
            )}
          >
            <span className={clsx("h-[10px] w-[10px] shrink-0 border border-black/30", l.color)} />
            {l.label}
          </button>
        ))}
        <div className="ml-auto flex text-[#606060]">
          <button aria-label="Highlight" className="flex w-[33px] items-center justify-center border-l border-[#ccc]">
            <svg viewBox="0 0 28 14" className="h-[14px] w-7">
              <circle cx="4" cy="4" r="2.500" fill="#f3f08a" stroke="#555" />
              <circle cx="4" cy="10.500" r="2.500" fill="#f3f08a" stroke="#555" />
              <path d="M10 3l5 4-5 4z" fill="#777" />
              <path d="M17 3h9l-3.500 4.500v4l-2 -1v-3z" fill="none" stroke="#444" strokeWidth="1.300" />
            </svg>
          </button>
          <button className="w-[34px] border-l border-[#ccc]">Snap</button>
          <button className="w-[65px] border-l border-[#ccc] whitespace-nowrap">Mask Level</button>
          <button className="w-[35px] border-x border-[#ccc]">Clear</button>
        </div>
      </div>
    </main>
  );
}

function StatusBar() {
  return (
    <footer className="flex h-6 shrink-0 items-center border-t border-[#6f6f6f] bg-[#f0f0f0] pb-[2px]">
      <p className="w-[485px] shrink-0 pl-[5px] whitespace-pre">X:318.8mm Y:212.8mm   Grid: 0.4mm</p>
      <p className="w-[487px] shrink-0 border-x border-[#a5a5a5] pl-[5px] leading-[18px] whitespace-pre">
        Polygon  (Top Layer-No Net)  on Layer2(+15VCC)
      </p>
      <div className="ml-auto flex h-[18px] pr-1 text-[#606060]">
        {PANELS.map((p) => (
          <button key={p.label} className={clsx("border border-r-0 border-[#ccc] bg-[#fafafa] whitespace-nowrap", p.width)}>
            <u className="underline-offset-1">{p.label[0]}</u>
            {p.label.slice(1)}
          </button>
        ))}
        <button className="ml-1 w-[18px] border border-[#ccc] bg-[#fafafa] text-[9px] whitespace-nowrap">&gt; &gt;</button>
      </div>
    </footer>
  );
}

export default function App() {
  return (
    <div className="flex min-h-screen flex-col bg-[#a8a8a8] font-['Open_Sans','Noto_Sans',sans-serif] text-[11px] text-black">
      <TitleBar />
      <MenuBar />
      <ToolBar />
      <div className="flex flex-1 gap-[3px] px-[3px] pt-[3px] pb-1">
        <ProjectsPanel />
        <Editor />
        <div className="flex w-[25px] shrink-0 flex-col gap-[3px] bg-[#efefef] pt-px pl-[2px]">
          {["Favorites", "Clipboard"].map((label) => (
            <button
              key={label}
              className="flex h-[55px] w-[21px] items-center justify-center border border-[#d5d5d5] bg-[#f9f9f9] text-[#505050] [writing-mode:vertical-rl]"
            >
              {label}
            </button>
          ))}
        </div>
      </div>
      <StatusBar />
    </div>
  );
}
